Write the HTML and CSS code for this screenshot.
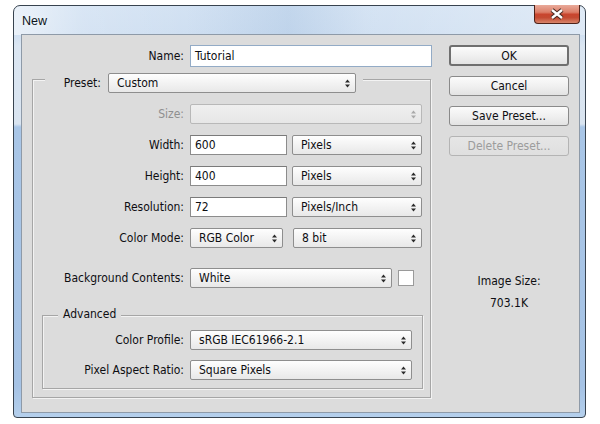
FILE: index.html
```html
<!DOCTYPE html>
<html>
<head>
<meta charset="utf-8">
<title>New</title>
<link rel="stylesheet" href="styles.css">
</head>
<body>
<div class="window">
  <div class="titlebar">
    <span class="title">New</span>
    <div class="close">
      <svg width="16" height="12" viewBox="0 0 16 12">
        <path d="M3 2 L13 10 M13 2 L3 10" stroke="#4a2a22" stroke-width="4.6" fill="none"/>
        <path d="M3 2 L13 10 M13 2 L3 10" stroke="#ffffff" stroke-width="2.4" fill="none"/>
      </svg>
    </div>
  </div>
  <div class="client">
    <div class="main">
      <div class="row name-row">
        <span class="lbl lbl-top">Name:</span>
        <div class="input input-focus name-input">Tutorial</div>
      </div>
      <fieldset class="group outer-group">
        <legend class="preset-legend">
          <span class="lbl preset-lbl">Preset:</span>
          <div class="select preset-select"><span>Custom</span><svg class="arr" width="5" height="9" viewBox="0 0 5 9"><path d="M2.5 0.5 L5 3.5 L0 3.5Z M0 5.5 L5 5.5 L2.5 8.5Z"/></svg></div>
        </legend>
        <div class="rows">
          <div class="row">
            <span class="lbl lbl-outer is-disabled">Size:</span>
            <div class="select select-disabled size-select"><span></span><svg class="arr" width="5" height="9" viewBox="0 0 5 9"><path d="M2.5 0.5 L5 3.5 L0 3.5Z M0 5.5 L5 5.5 L2.5 8.5Z"/></svg></div>
          </div>
          <div class="row">
            <span class="lbl lbl-outer">Width:</span>
            <div class="input num-input">600</div>
            <div class="select unit-select"><span>Pixels</span><svg class="arr" width="5" height="9" viewBox="0 0 5 9"><path d="M2.5 0.5 L5 3.5 L0 3.5Z M0 5.5 L5 5.5 L2.5 8.5Z"/></svg></div>
          </div>
          <div class="row">
            <span class="lbl lbl-outer">Height:</span>
            <div class="input num-input">400</div>
            <div class="select unit-select"><span>Pixels</span><svg class="arr" width="5" height="9" viewBox="0 0 5 9"><path d="M2.5 0.5 L5 3.5 L0 3.5Z M0 5.5 L5 5.5 L2.5 8.5Z"/></svg></div>
          </div>
          <div class="row">
            <span class="lbl lbl-outer">Resolution:</span>
            <div class="input num-input">72</div>
            <div class="select unit-select"><span>Pixels/Inch</span><svg class="arr" width="5" height="9" viewBox="0 0 5 9"><path d="M2.5 0.5 L5 3.5 L0 3.5Z M0 5.5 L5 5.5 L2.5 8.5Z"/></svg></div>
          </div>
          <div class="row">
            <span class="lbl lbl-outer">Color Mode:</span>
            <div class="select mode-select"><span>RGB Color</span><svg class="arr" width="5" height="9" viewBox="0 0 5 9"><path d="M2.5 0.5 L5 3.5 L0 3.5Z M0 5.5 L5 5.5 L2.5 8.5Z"/></svg></div>
            <div class="select bit-select"><span>8 bit</span><svg class="arr" width="5" height="9" viewBox="0 0 5 9"><path d="M2.5 0.5 L5 3.5 L0 3.5Z M0 5.5 L5 5.5 L2.5 8.5Z"/></svg></div>
          </div>
        </div>
        <div class="row bg-row">
          <span class="lbl lbl-outer">Background Contents:</span>
          <div class="select bg-select"><span>White</span><svg class="arr" width="5" height="9" viewBox="0 0 5 9"><path d="M2.5 0.5 L5 3.5 L0 3.5Z M0 5.5 L5 5.5 L2.5 8.5Z"/></svg></div>
          <div class="swatch"></div>
        </div>
        <fieldset class="group adv-group">
          <legend class="adv-legend">Advanced</legend>
          <div class="rows adv-rows">
            <div class="row">
              <span class="lbl lbl-adv">Color Profile:</span>
              <div class="select adv-select"><span>sRGB IEC61966-2.1</span><svg class="arr" width="5" height="9" viewBox="0 0 5 9"><path d="M2.5 0.5 L5 3.5 L0 3.5Z M0 5.5 L5 5.5 L2.5 8.5Z"/></svg></div>
            </div>
            <div class="row">
              <span class="lbl lbl-adv">Pixel Aspect Ratio:</span>
              <div class="select adv-select"><span>Square Pixels</span><svg class="arr" width="5" height="9" viewBox="0 0 5 9"><path d="M2.5 0.5 L5 3.5 L0 3.5Z M0 5.5 L5 5.5 L2.5 8.5Z"/></svg></div>
            </div>
          </div>
        </fieldset>
      </fieldset>
    </div>
    <div class="side">
      <div class="btn btn-default">OK</div>
      <div class="btn">Cancel</div>
      <div class="btn">Save Preset...</div>
      <div class="btn btn-disabled">Delete Preset...</div>
      <div class="imgsize">
        <div class="imgsize-label">Image Size:</div>
        <div class="imgsize-value">703.1K</div>
      </div>
    </div>
  </div>
</div>
</body>
</html>
```

FILE: styles.css
```css
* { box-sizing: border-box; }
html, body { margin: 0; padding: 0; }
body {
  width: 600px;
  height: 424px;
  background: #ffffff;
  font-family: "DejaVu Sans Condensed", "DejaVu Sans", Verdana, sans-serif;
  font-stretch: condensed;
  font-size: 12px;
  color: #0e0e12;
  overflow: hidden;
}

.window {
  margin: 5px 0 0 13px;
  width: 573px;
  height: 413px;
  border: 1px solid #38434f;
  border-radius: 7px 7px 4px 4px;
  padding: 0 5px 4px 7px;
  display: flex;
  flex-direction: column;
  background:
    linear-gradient(90deg, rgba(255,255,255,0.55) 0, rgba(255,255,255,0.15) 12%, rgba(255,255,255,0) 30%, rgba(120,160,205,0.18) 48%, rgba(255,255,255,0.05) 62%, rgba(255,255,255,0.3) 100%) top left / 100% 29px no-repeat,
    linear-gradient(180deg, #d3e2f3 0, #cfdff1 28px, #dbe6f2 40px, #d9e4f0 118px, #a9c6e7 121px, #a6c3e5 380px, #b4cfec 410px);
}

.titlebar {
  height: 28px;
  display: flex;
  justify-content: space-between;
  align-items: flex-start;
}
.title {
  font-family: "Liberation Sans", Arial, sans-serif;
  font-stretch: normal;
  font-size: 12.5px;
  line-height: 14px;
  color: #0c1420;
  padding: 8px 0 0 1px;
  text-shadow: 0 0 6px rgba(255,255,255,0.9);
}
.close {
  margin-top: -1px;
  width: 46px;
  height: 19px;
  border: 1px solid #4e2219;
  border-top: none;
  border-radius: 0 0 4px 4px;
  background: linear-gradient(180deg, #e9aa9a 0, #dc7f69 40%, #c9452e 52%, #c44a32 70%, #d8856b 100%);
  display: flex;
  align-items: center;
  justify-content: center;
}

.client {
  height: 379px;
  border: 1px solid #8e9aa8;
  background: #dcdcdc;
  display: flex;
}

.main {
  width: 409px;
  padding: 10px 0 0 10px;
  flex: none;
}

.row {
  display: flex;
  align-items: center;
  height: 20px;
}
.name-row { height: 22px; }

.lbl {
  flex: none;
  text-align: right;
  margin-right: 6px;
  white-space: nowrap;
  line-height: 14px;
}
.lbl-top { width: 152px; }
.lbl-outer { width: 142px; }
.lbl-adv { width: 141px; }
.is-disabled { color: #8f8f8f; }

.input {
  flex: none;
  height: 20px;
  background: #ffffff;
  border: 1px solid #8c8c8c;
  border-top-color: #7a7a7a;
  padding: 0 4px;
  line-height: 18px;
  white-space: nowrap;
}
.input-focus { border-color: #93abc6; }
.name-input { width: 242px; height: 22px; line-height: 20px; }
.num-input { width: 97px; margin-right: 5px; }

.select {
  flex: none;
  height: 20px;
  border: 1px solid #8e8e8e;
  border-radius: 2px;
  background: linear-gradient(180deg, #fefefe 0, #f4f4f4 45%, #e8e8e8 100%);
  display: flex;
  align-items: center;
  justify-content: space-between;
  padding: 0 5px 0 8px;
  line-height: 14px;
  white-space: nowrap;
}
.arr { fill: #2b2b2b; flex: none; }
.select-disabled {
  border-color: #b8b8b8;
  background: linear-gradient(180deg, #efefef 0, #e6e6e6 100%);
}
.select-disabled .arr { fill: #a9a9a9; }

.preset-select { width: 248px; }
.size-select { width: 232px; }
.unit-select { width: 130px; }
.mode-select { width: 93px; margin-right: 10px; }
.bit-select { width: 129px; }
.bg-select { width: 202px; margin-right: 6px; }
.adv-select { width: 222px; }

.swatch {
  flex: none;
  width: 16px;
  height: 16px;
  background: #ffffff;
  border: 1px solid #9a9a9a;
}

.group {
  margin: 0;
  min-inline-size: 0;
  border: 1px solid #a6a6a6;
  box-shadow: inset 1px 1px 0 #f3f3f3, 1px 1px 0 #f3f3f3;
}
.outer-group {
  width: 399px;
  margin-top: -1px;
  padding: 11px 7px 8px 9px;
}
.preset-legend {
  display: flex;
  align-items: center;
  margin-left: 3px;
  padding: 7px 7px 0 0;
  background: #dcdcdc;
}
.preset-lbl { width: 56px; margin-right: 7px; }

.rows {
  display: flex;
  flex-direction: column;
  gap: 11px;
}
.bg-row { margin-top: 20px; }

.adv-group {
  width: 381px;
  margin-top: 19px;
  padding: 6px 0 8px 0;
}
.adv-legend {
  margin-left: 15px;
  padding: 0 5px 3px 5px;
  line-height: 14px;
  background: #dcdcdc;
}
.adv-rows { gap: 10px; }

.side {
  flex: none;
  width: 138px;
  padding: 10px 0 0 18px;
  display: flex;
  flex-direction: column;
}
.btn {
  width: 120px;
  height: 20px;
  margin-bottom: 10px;
  border: 1px solid #8a8a8a;
  border-radius: 3px;
  background: linear-gradient(180deg, #fbfbfb 0, #f0f0f0 50%, #e3e3e3 100%);
  display: flex;
  align-items: center;
  justify-content: center;
  line-height: 14px;
  white-space: nowrap;
}
.btn-default {
  height: 21px;
  border: 2px solid #6f6f6f;
}
.btn-disabled {
  border-color: #b4b4b4;
  background: linear-gradient(180deg, #e6e6e6 0, #dfdfdf 100%);
  color: #9c9c9c;
}

.imgsize {
  width: 120px;
  margin-top: 108px;
  text-align: center;
  line-height: 14px;
}
.imgsize-value { margin-top: 8px; }
```
